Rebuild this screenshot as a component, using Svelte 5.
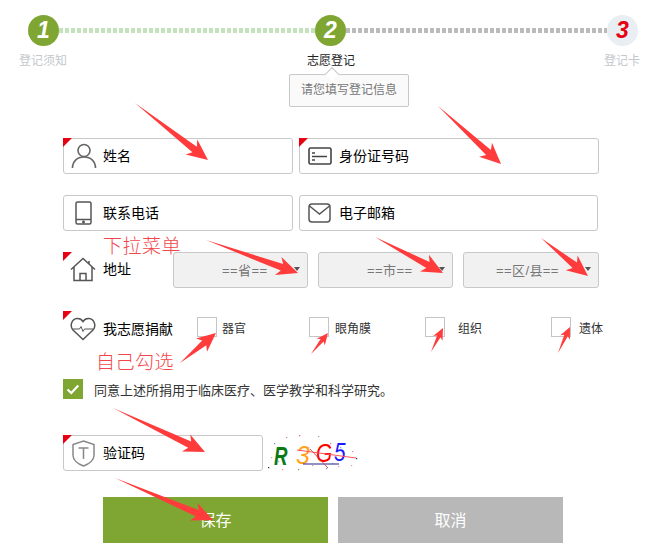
<script>
  // red review arrows drawn over the form: tail x/y, tip x/y, size
  const arrows = [
    [135, 103, 208, 160, 1],
    [438, 106, 501, 164, 1],
    [206, 240, 298, 273, 1],
    [375, 237, 443, 273, 1],
    [541, 238, 588, 276, 1],
    [180, 363, 216, 333, 0.9],
    [311, 354, 328, 333, 0.55],
    [431, 352, 443, 328, 0.55],
    [558, 353, 570, 327, 0.55],
    [113, 408, 205, 452, 1],
    [115, 478, 213, 520, 1]
  ];

  function arrowPoints([x1, y1, x2, y2, s]) {
    const len = Math.hypot(x2 - x1, y2 - y1);
    const ux = (x2 - x1) / len;
    const uy = (y2 - y1) / len;
    const at = (back, side) =>
      (x2 - ux * back - uy * side).toFixed(1) + "," + (y2 - uy * back + ux * side).toFixed(1);
    return [
      x1 + "," + y1,
      at(17 * s, 3.5 * s),
      at(21 * s, 9.5 * s),
      x2 + "," + y2,
      at(21 * s, -9.5 * s),
      at(17 * s, -3.5 * s)
    ].join(" ");
  }

  const organs = [
    { name: "器官", width: 112, gap: 5 },
    { name: "眼角膜", width: 116, gap: 6 },
    { name: "组织", width: 126, gap: 13 },
    { name: "遗体", width: 0, gap: 8 }
  ];

  const noise = [
    [6, 8, "#7a7ad0"], [3, 22, "#c9a0a0"], [0, 32, "#222"], [18, 2, "#c88"], [31, 0, "#d66"],
    [50, 1, "#99c"], [40, 12, "#aac"], [44, 30, "#d99"], [58, 33, "#88d"], [64, 28, "#c9c"],
    [70, 31, "#e99"], [83, 30, "#d99"], [88, 23, "#338"], [84, 16, "#d88"], [30, 34, "#5a5"],
    [14, 34, "#d99"], [72, 12, "#99c"], [62, 8, "#c99"], [10, 26, "#aac"], [54, 25, "#c88"]
  ];
</script>

<div class="page">
  <div class="track">
    <div class="circle done">1</div>
    <div class="dots green"></div>
    <div class="circle done">2</div>
    <div class="dots grey"></div>
    <div class="circle todo">3</div>
  </div>
  <div class="labels">
    <span class="first">登记须知</span>
    <span class="current">志愿登记</span>
    <span class="last">登记卡</span>
  </div>
  <div class="tip">请您填写登记信息</div>

  <form class="form">
    <div class="row first-row">
      <div class="field marked name">
        <span class="icon">
          <svg width="26" height="26" viewBox="0 0 26 26" fill="none" stroke="#666" stroke-width="1.6">
            <circle cx="13" cy="7.5" r="6" />
            <path d="M1.5 25c0-6.5 4.5-11 11.500-11s11.500 4.500 11.500 11" />
          </svg>
        </span>
        <span class="text">姓名</span>
      </div>
      <div class="field marked idcard">
        <span class="icon">
          <svg width="24" height="18" viewBox="0 0 24 18" fill="none" stroke="#444" stroke-width="1.6">
            <rect x="1" y="1" width="22" height="16" rx="1.500" />
            <path d="M4 6h3M4 9.500h15M4 13h3" />
          </svg>
        </span>
        <span class="text">身份证号码</span>
      </div>
    </div>

    <div class="row">
      <div class="field name">
        <span class="icon">
          <svg width="17" height="24" viewBox="0 0 17 24" fill="none" stroke="#555" stroke-width="1.500">
            <rect x="1" y="1" width="15" height="22" rx="1.500" />
            <path d="M1 18.500h15" />
            <circle cx="8.500" cy="21" r="0.700" fill="#555" />
          </svg>
        </span>
        <span class="text">联系电话</span>
      </div>
      <div class="field mail">
        <span class="icon">
          <svg width="23" height="20" viewBox="0 0 23 20" fill="none" stroke="#555" stroke-width="1.500">
            <rect x="1" y="1" width="21" height="18" rx="3" />
            <path d="M1.500 3l10 8 10-8" />
          </svg>
        </span>
        <span class="text">电子邮箱</span>
      </div>
    </div>

    <div class="row address">
      <div class="label marked">
        <span class="icon">
          <svg width="26" height="25" viewBox="0 0 26 25" fill="none" stroke="#555" stroke-width="1.500">
            <path d="M1 12.500L13 1.500l12 11M4 10v13.500h18V10M10 23.500v-7h6v7M19 4v3.500" />
          </svg>
        </span>
        <span class="text">地址</span>
      </div>
      <div class="select"><span class="value">==省==</span><i class="caret"></i></div>
      <div class="select"><span class="value">==市==</span><i class="caret"></i></div>
      <div class="select wide"><span class="value">==区/县==</span><i class="caret"></i></div>
    </div>

    <div class="row donate">
      <div class="label marked">
        <span class="icon">
          <svg width="26" height="24" viewBox="0 0 26 24" fill="none" stroke="#555" stroke-width="1.500">
            <path d="M13 22.500L3 13C-0.500 9 1.500 2 7 1.500c2.500-.2 4.800 1 6 3 1.200-2 3.500-3.200 6-3 5.500.5 7.500 7.500 4 11.500z" />
            <path d="M2.500 12h7l1.500-2.500 2 5 1.500-2.500h9" stroke-width="1" />
          </svg>
        </span>
        <span class="text">我志愿捐献</span>
      </div>
      <div class="organs">
        {#each organs as organ}
          <label class="organ" style="width: {organ.width ? organ.width + 'px' : 'auto'}; gap: {organ.gap}px">
            <span class="box"></span>
            <span>{organ.name}</span>
          </label>
        {/each}
      </div>
    </div>

    <div class="agree">
      <span class="checked">
        <svg width="14" height="11" viewBox="0 0 14 11" fill="none" stroke="#fff" stroke-width="2.200">
          <path d="M1.500 5.500l3.800 3.500 7-7.500" />
        </svg>
      </span>
      <span>同意上述所捐用于临床医疗、医学教学和科学研究。</span>
    </div>

    <div class="row code">
      <div class="field marked captcha-field">
        <span class="icon">
          <svg width="23" height="27" viewBox="0 0 23 27" fill="none" stroke="#888" stroke-width="1.500">
            <path d="M11.500 1L22 4.500v11c0 4.500-5 8.500-10.500 10.500C6 24 1 20 1 15.500v-11z" />
            <path d="M6.500 8h10M11.500 8v11" />
          </svg>
        </span>
        <span class="text">验证码</span>
      </div>
      <svg class="captcha" width="90" height="37" viewBox="0 0 90 37">
        {#each noise as [x, y, c]}
          <rect {x} {y} width="1.200" height="1.200" fill={c} />
        {/each}
        <text transform="translate(6 30) scale(0.72 1)" class="r">R</text>
        <text transform="translate(28 29) scale(0.95 1)" class="n3">3</text>
        <text transform="translate(48 27) scale(0.8 1)" class="g">G</text>
        <text transform="translate(66 26) scale(0.8 1)" class="n5">5</text>
        <path d="M29 15L88 23" stroke="#f55" stroke-width="1" />
        <path d="M35 29L71 29" stroke="#228" stroke-width="1" />
        <path d="M42 14L60 33" stroke="#c33" stroke-width="0.800" />
      </svg>
    </div>

    <div class="buttons">
      <button type="button" class="save">保存</button>
      <button type="button" class="cancel">取消</button>
    </div>
  </form>

  <!-- review marks that were painted over the screenshot -->
  <span class="note dropdown">下拉菜单</span>
  <span class="note tick">自己勾选</span>
  <svg class="overlay" width="666" height="559" viewBox="0 0 666 559">
    {#each arrows as arrow}
      <polygon points={arrowPoints(arrow)} fill="#ff3b3b" />
    {/each}
  </svg>
</div>

<style>
  :global(body) {
    margin: 0;
    background: #fff;
  }

  .page {
    position: relative;
    width: 666px;
    height: 559px;
    overflow: hidden;
    box-sizing: border-box;
    padding-top: 15px;
    font-family: "Liberation Sans", "Noto Sans CJK SC", sans-serif;
    color: #000;
  }

  .track {
    display: flex;
    align-items: center;
    margin: 0 28px;
  }

  .circle {
    width: 31px;
    height: 31px;
    flex: none;
    border-radius: 50%;
    display: flex;
    align-items: center;
    justify-content: center;
    font: italic bold 23px "Liberation Sans", sans-serif;
  }

  .done {
    background: #7fa632;
    color: #fff;
  }

  .todo {
    background: #e9eef2;
    color: #e60012;
  }

  .dots {
    height: 5px;
  }

  .green {
    width: 256px;
    background: repeating-linear-gradient(to right, #c4e3bd 0 4px, #fff 4px 6px);
  }

  .grey {
    width: 261px;
    background: repeating-linear-gradient(to right, #bbb 0 4px, #fff 4px 6px);
  }

  .labels {
    display: flex;
    margin-top: 7px;
    padding-left: 19px;
    font-size: 12px;
    line-height: 17px;
    color: #c3c8cc;
  }

  .current {
    margin-left: 240px;
    color: #222;
  }

  .last {
    margin-left: 249px;
  }

  .tip {
    position: relative;
    box-sizing: border-box;
    width: 120px;
    height: 33px;
    margin: 4px 0 0 289px;
    border: 1px solid #c8c8c8;
    border-radius: 2px;
    background: #fafafa;
    font-size: 12px;
    line-height: 31px;
    text-align: center;
    color: #777;
  }

  .tip::before {
    content: "";
    position: absolute;
    top: -6px;
    left: 37px;
    width: 9px;
    height: 9px;
    background: #fff;
    border-top: 1px solid #c8c8c8;
    border-left: 1px solid #c8c8c8;
    transform: rotate(45deg);
  }

  .form {
    margin: 31px 0 0 63px;
    font-size: 13px;
  }

  .text {
    font-size: 14px;
    padding-bottom: 2px;
  }

  .row {
    display: flex;
    margin-top: 21px;
  }

  .first-row {
    margin-top: 0;
  }

  .field,
  .select {
    box-sizing: border-box;
    height: 36px;
    display: flex;
    align-items: center;
    border: 1px solid #c8c8c8;
    border-radius: 3px;
    background: #fff;
  }

  .marked {
    position: relative;
  }

  .marked::before {
    content: "";
    position: absolute;
    top: -1px;
    left: -1px;
    border-top: 9px solid #e60012;
    border-right: 9px solid transparent;
  }

  .label.marked::before {
    top: 0;
    left: 0;
  }

  .name {
    width: 230px;
    margin-right: 6px;
  }

  .idcard {
    width: 300px;
  }

  .mail {
    width: 299px;
  }

  .captcha-field {
    width: 200px;
  }

  .icon {
    width: 39px;
    flex: none;
    display: flex;
    justify-content: center;
    align-items: center;
  }

  .label {
    display: flex;
    align-items: center;
    height: 36px;
    width: 110px;
    flex: none;
  }

  .label .icon {
    width: 40px;
  }

  .address .label {
    align-items: flex-start;
    padding-top: 5px;
    box-sizing: border-box;
  }

  .address .label .text {
    line-height: 24px;
  }

  .select {
    width: 135px;
    margin-right: 10px;
    padding: 0 7px 2px 48px;
    background: #f1f1f1;
    color: #777;
    font-size: 13px;
    letter-spacing: 0.4px;
    justify-content: space-between;
  }

  .select.wide {
    width: 136px;
    margin-right: 0;
    padding-left: 32px;
  }

  .caret {
    border-top: 4px solid #555;
    border-left: 3px solid transparent;
    border-right: 3px solid transparent;
  }

  .donate {
    margin-top: 23px;
    align-items: flex-start;
  }

  .donate .label {
    width: 134px;
    height: 36px;
  }

  .organs {
    display: flex;
    margin-top: 6px;
    font-size: 12px;
    color: #333;
  }

  .organ {
    display: flex;
    align-items: center;
  }

  .box {
    box-sizing: border-box;
    width: 20px;
    height: 20px;
    border: 1px solid #c4c4c4;
  }

  .agree {
    display: flex;
    align-items: center;
    gap: 11px;
    margin-top: 32px;
    color: #333;
  }

  .checked {
    width: 20px;
    height: 20px;
    background: #7fa632;
    display: flex;
    align-items: center;
    justify-content: center;
  }

  .code {
    margin-top: 36px;
  }

  .captcha {
    margin-left: 5px;
  }

  .captcha text {
    font-family: "Liberation Sans", sans-serif;
    font-style: italic;
    font-size: 26px;
  }

  .captcha .r {
    font-weight: bold;
    fill: #0a7a12;
  }

  .captcha .n3 {
    fill: #ffa41c;
  }

  .captcha .g {
    fill: #f00;
  }

  .captcha .n5 {
    fill: #1a1aff;
  }

  .buttons {
    display: flex;
    gap: 10px;
    margin: 25px 0 0 40px;
  }

  button {
    width: 225px;
    height: 46px;
    padding: 0 0 3px;
    border: none;
    color: #fff;
    font: 16px "Liberation Sans", "Noto Sans CJK SC", sans-serif;
  }

  .save {
    background: #7fa632;
  }

  .cancel {
    background: #b8b8b8;
  }

  .note {
    position: absolute;
    color: #f2474a;
    font-size: 19px;
    line-height: 24px;
    letter-spacing: 0.500px;
    font-weight: 300;
  }

  .dropdown {
    top: 235px;
    left: 103px;
  }

  .tick {
    top: 351px;
    left: 96px;
  }

  .overlay {
    position: absolute;
    top: 0;
    left: 0;
    pointer-events: none;
  }
</style>
